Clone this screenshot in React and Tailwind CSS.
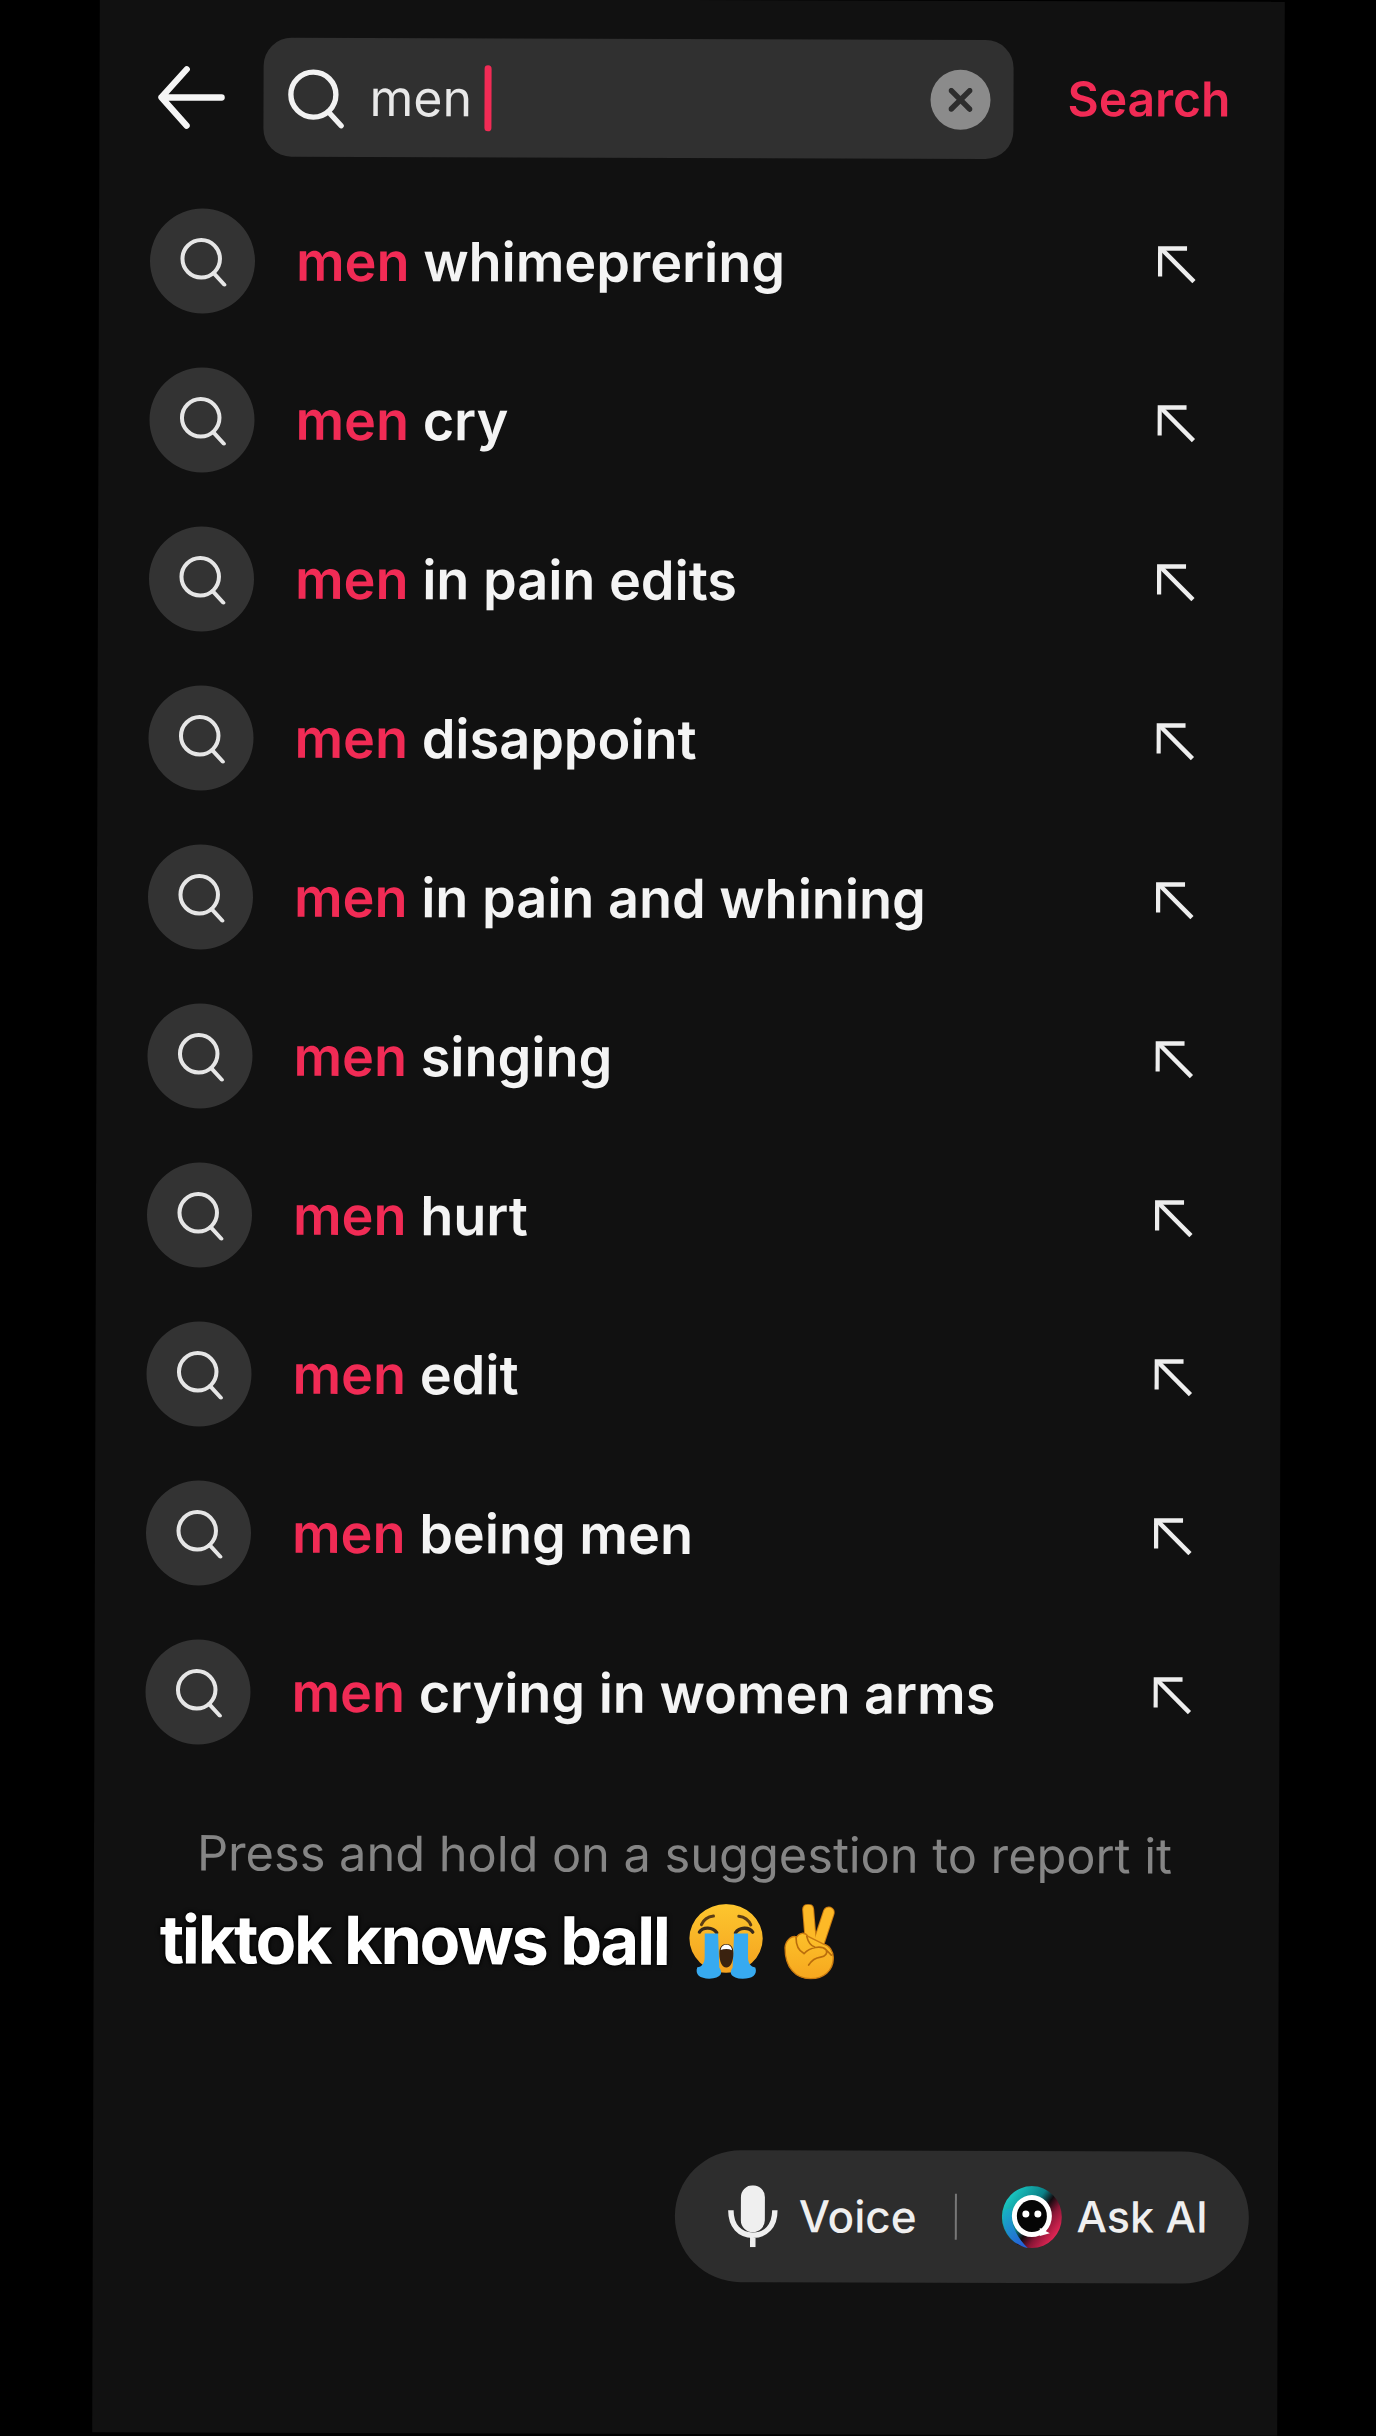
const rows = [
  "whimeprering",
  "cry",
  "in pain edits",
  "disappoint",
  "in pain and whining",
  "singing",
  "hurt",
  "edit",
  "being men",
  "crying in women arms",
];

function SearchGlyph({ className, width }) {
  return (
    <svg viewBox="0 0 56 56" className={className} fill="none" stroke="currentColor" strokeWidth={width} strokeLinecap="round">
      <circle cx="26" cy="25" r="21" />
      <path d="M40 41 L52 54" />
    </svg>
  );
}

function Row({ text }) {
  return (
    <div className="flex h-[159px] items-center">
      <div className="flex h-[105px] w-[105px] shrink-0 items-center justify-center rounded-full bg-[#333333] text-[#e6e6e6]">
        <SearchGlyph className="h-[50px] w-[50px]" width={4.5} />
      </div>
      <div className="ml-[41px] flex-1 whitespace-nowrap text-[54px] font-semibold leading-none text-[#f4f4f4]">
        <span className="text-[#f12b55]">men</span> {text}
      </div>
      <svg viewBox="0 0 38 38" className="mr-[3px] h-[38px] w-[38px] text-[#eeeeee]" fill="none" stroke="currentColor" strokeWidth="4.5">
        <path d="M2 31 V3 H29" />
        <path d="M3 3 L36 36" />
      </svg>
    </div>
  );
}

function CryingEmoji() {
  return (
    <svg viewBox="0 0 225 225" className="h-[75px] w-[75px] shrink-0">
      <defs>
        <linearGradient id="face" x1="0" y1="0" x2="0" y2="1">
          <stop offset="0" stopColor="#fdc62e" />
          <stop offset="1" stopColor="#f4a21f" />
        </linearGradient>
      </defs>
      <ellipse cx="112" cy="103" rx="110" ry="103" fill="url(#face)" />
      <path d="M32 84 C42 68 72 68 84 86" stroke="#3a2a1a" strokeWidth="10" fill="none" strokeLinecap="round" />
      <path d="M140 86 C152 68 182 68 192 84" stroke="#3a2a1a" strokeWidth="10" fill="none" strokeLinecap="round" />
      <path d="M38 62 C44 48 58 38 74 36" stroke="#5b3c14" strokeWidth="9" fill="none" strokeLinecap="round" />
      <path d="M150 36 C166 38 180 48 186 62" stroke="#5b3c14" strokeWidth="9" fill="none" strokeLinecap="round" />
      <path d="M48 88 H88 L92 190 C104 206 98 222 62 224 C34 224 18 212 26 190 C40 188 48 176 48 160 Z" fill="#37aaf0" />
      <path d="M136 88 H178 V160 C178 176 186 188 200 190 C208 212 190 224 162 224 C126 222 120 206 132 190 Z" fill="#37aaf0" />
      <path d="M92 148 C92 128 100 120 113 120 C126 120 134 128 134 148 C134 172 126 190 113 190 C100 190 92 172 92 148 Z" fill="#3a220f" />
      <path d="M96 138 C98 126 104 122 113 122 C122 122 128 126 130 138 C120 134 106 134 96 138 Z" fill="#ffffff" />
    </svg>
  );
}

function VictoryEmoji() {
  return (
    <svg viewBox="0 0 151 225" className="h-[75px] w-[51px] shrink-0">
      <defs>
        <linearGradient id="hand" x1="0" y1="0" x2="0" y2="1">
          <stop offset="0" stopColor="#fdc12a" />
          <stop offset="1" stopColor="#f6a71f" />
        </linearGradient>
      </defs>
      <path d="M72 15 L80 110" stroke="#c97a10" strokeWidth="36" strokeLinecap="round" />
      <path d="M134 24 L104 115" stroke="#c97a10" strokeWidth="36" strokeLinecap="round" />
      <path d="M72 15 L80 110" stroke="#fdb927" strokeWidth="30" strokeLinecap="round" />
      <path d="M134 24 L104 115" stroke="#fdb927" strokeWidth="30" strokeLinecap="round" />
      <path d="M3 130 C5 105 25 92 38 98 C45 85 62 82 72 96 L120 120 C135 122 148 140 148 160 C148 200 118 223 80 223 C35 223 3 190 3 130 Z" fill="url(#hand)" stroke="#c97a10" strokeWidth="4" />
      <path d="M36 100 C36 122 44 138 58 146 M68 96 C72 112 80 124 92 128 M60 148 C78 128 112 122 126 136 C132 146 124 156 110 158 C94 160 84 166 74 182 M126 136 L142 152" stroke="#b96d0c" strokeWidth="5" fill="none" strokeLinecap="round" />
    </svg>
  );
}

function AskLogo() {
  return (
    <svg viewBox="0 0 60 62" className="h-[62px] w-[60px]">
      <defs>
        <linearGradient id="ring" x1="0.05" y1="0.1" x2="0.95" y2="0.8">
          <stop offset="0" stopColor="#1ed6cf" />
          <stop offset="0.45" stopColor="#0a7f86" />
          <stop offset="0.6" stopColor="#120a0e" />
          <stop offset="0.75" stopColor="#8a1636" />
          <stop offset="1" stopColor="#f0285a" />
        </linearGradient>
        <linearGradient id="ringLow" x1="0" y1="0" x2="0.6" y2="1">
          <stop offset="0" stopColor="#16b6c2" />
          <stop offset="1" stopColor="#2563d8" />
        </linearGradient>
      </defs>
      <ellipse cx="30" cy="31" rx="30" ry="31" fill="url(#ring)" />
      <path d="M2 24 C-2 42 8 58 26 62 C16 52 8 40 10 22 Z" fill="url(#ringLow)" />
      <ellipse cx="30" cy="30" rx="20" ry="21" fill="#ffffff" />
      <ellipse cx="30" cy="30" rx="15" ry="16" fill="#050505" />
      <path d="M38 42 L48 47 L38 50 Z" fill="#ffffff" />
      <circle cx="24" cy="28" r="3.5" fill="#ffffff" />
      <circle cx="36" cy="28" r="3.5" fill="#ffffff" />
    </svg>
  );
}

export default function App() {
  return (
    <div className="relative h-[2436px] w-[1376px] overflow-hidden bg-black font-['Inter','Liberation_Sans',sans-serif]">
      <div className="ml-[96px] flex h-[2434px] w-[1185px] rotate-[0.18deg] flex-col bg-[#111111] pt-[39px] text-white">
        <div className="flex h-[119px] items-center">
          <svg viewBox="0 0 70 64" className="ml-[58px] h-[64px] w-[68px] shrink-0 text-[#f5f5f5]" fill="none" stroke="currentColor" strokeWidth="6.5" strokeLinecap="round" strokeLinejoin="round">
            <path d="M66 32 H4 M30 3 L4 32 L30 61" />
          </svg>
          <div className="ml-[38px] flex h-[119px] w-[750px] shrink-0 items-center rounded-[28px] bg-[#303030]">
            <SearchGlyph className="ml-[22px] h-[64px] w-[60px] shrink-0 text-[#f2f2f2]" width={5} />
            <span className="ml-[24px] text-[50px] leading-none text-[#e8e8e8]">men</span>
            <span className="ml-[12px] h-[66px] w-[7px] rounded-full bg-[#f12b55]" />
            <div className="ml-auto mr-[23px] flex h-[60px] w-[60px] items-center justify-center rounded-full bg-[#8b8b8b]">
              <svg viewBox="0 0 26 26" className="h-[24px] w-[24px]" stroke="#2d2d2d" strokeWidth="6" strokeLinecap="round">
                <path d="M3 3 L23 23 M23 3 L3 23" />
              </svg>
            </div>
          </div>
          <span className="ml-[54px] -translate-y-[1px] text-[48px] font-semibold leading-none text-[#f12b55]">Search</span>
        </div>
        <div className="mt-[25px] pl-[51px] pr-[85px]">
          {rows.map((r) => (
            <Row key={r} text={r} />
          ))}
        </div>
        <div className="mt-[58px] pl-[103px] text-[48.7px] leading-none text-[#858585]">
          Press and hold on a suggestion to report it
        </div>
        <div className="mt-[24px] flex items-center pl-[66px]">
          <span className="text-[66.5px] font-bold leading-none tracking-[-2.2px] text-white [text-shadow:0_0_5px_#000,0_0_3px_#000]">tiktok knows ball</span>
          <span className="ml-[20px]"><CryingEmoji /></span>
          <span className="ml-[20px]"><VictoryEmoji /></span>
        </div>
        <div className="ml-[582px] mt-[171px] flex h-[132px] w-[574px] items-center rounded-full bg-[#2d2d2d]">
          <svg viewBox="0 0 50 62" className="ml-[53px] h-[62px] w-[50px] shrink-0" fill="none">
            <rect x="13" y="0" width="24" height="47" rx="12" fill="#efefef" />
            <path d="M3 25 C3 41 12 50 25 50 C38 50 47 41 47 25 M25 50 V62" stroke="#efefef" strokeWidth="5.5" />
          </svg>
          <span className="ml-[21px] text-[44px] font-medium leading-none text-[#efefef]">Voice</span>
          <span className="ml-[38px] h-[46px] w-[2px] bg-[#777777]" />
          <div className="ml-[45px]"><AskLogo /></div>
          <span className="ml-[15px] text-[43px] font-medium leading-none text-[#efefef]">Ask AI</span>
        </div>
      </div>
    </div>
  );
}
